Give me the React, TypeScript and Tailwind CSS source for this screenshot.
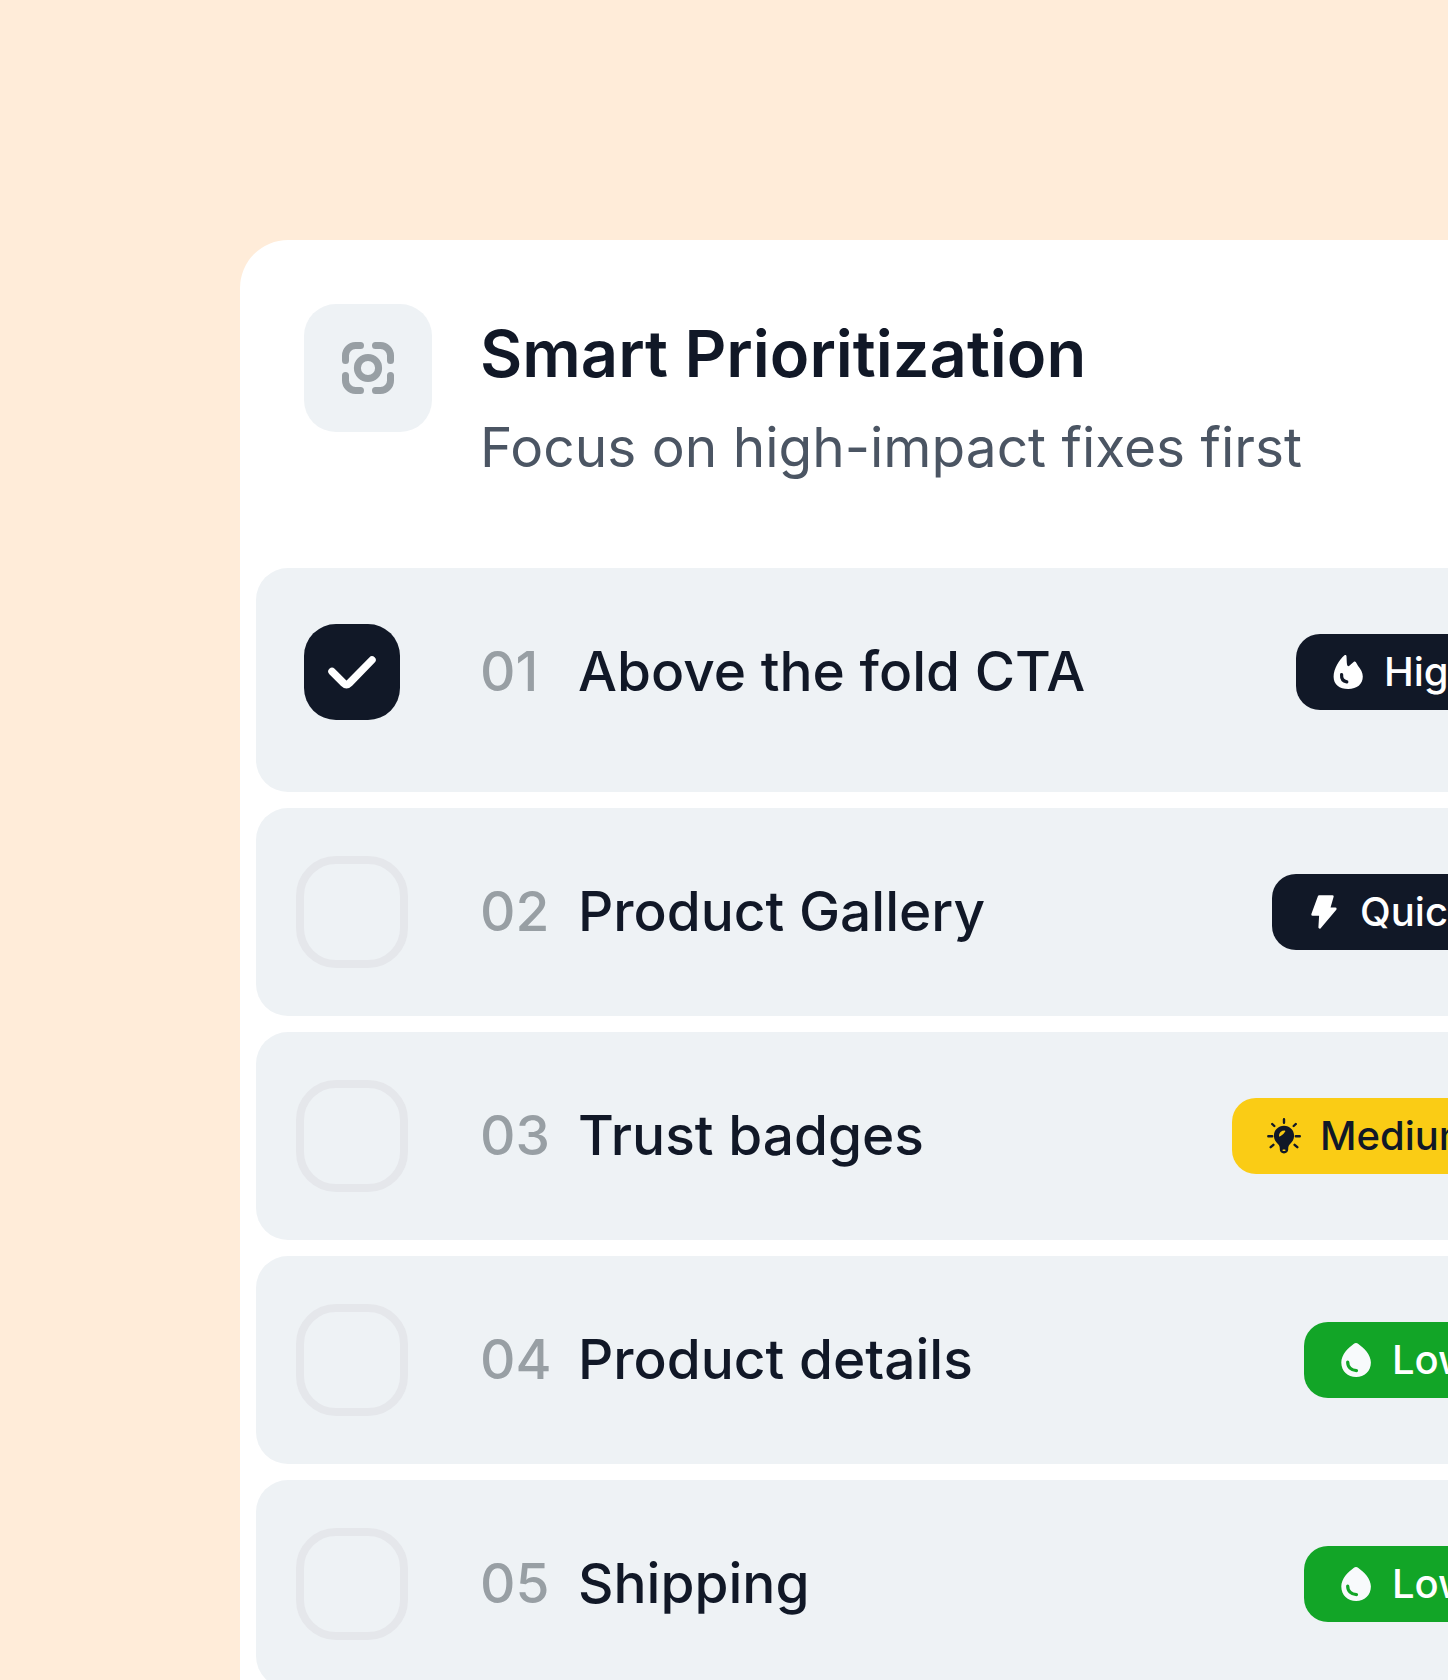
import { useState } from "react";
import type { ReactNode } from "react";
import clsx from "clsx";

type Task = {
  no: string;
  name: string;
  badge: string;
  tone: string;
  icon: ReactNode;
};

function FlameIcon() {
  return (
    <svg viewBox="0 0 40 40" className="size-10 shrink-0" fill="none" aria-hidden="true">
      <path
        d="M16.500 3.200c1-.6 1.900-.1 2 1 .2 3.200.2 6.200.6 8.600.3 1.500 1.500 1.700 2.500.8l4-3.700c.9-.7 1.600-.6 2.200.200l2.300 3.900c2.700 3.400 4.700 6.400 4.700 10.600 0 7.800-5.800 12.400-14.600 12.400S5.600 32.600 5.600 24.800C5.600 16.500 11.500 7.300 16.500 3.200Z"
        fill="#fff"
      />
      <path d="M13.600 22.500c-.3 4 1.800 6.800 5.200 7.400" stroke="#111827" strokeWidth="3.2" strokeLinecap="round" />
    </svg>
  );
}

function BoltIcon() {
  return (
    <svg viewBox="0 0 40 40" className="size-10 shrink-0" aria-hidden="true">
      <path
        d="M15.200 4.500h13.200l-3.600 12.300h6.500L15.700 35.300l.8-12.900H8.600Z"
        fill="#fff"
        stroke="#fff"
        strokeWidth="2.6"
        strokeLinejoin="round"
      />
    </svg>
  );
}

function BulbIcon() {
  return (
    <svg viewBox="0 0 40 40" className="size-10 shrink-0" fill="none" aria-hidden="true">
      <path
        d="M20 9.700c5.700 0 10.100 4.400 10.100 10 0 3.700-1.800 6.100-4 8.300-1.500 1.500-1.900 2.900-1.900 4.800v.8c0 2.300-1.700 3.800-4.200 3.800s-4.200-1.500-4.200-3.800v-.8c0-1.900-.4-3.300-1.900-4.800-2.200-2.200-4-4.600-4-8.300 0-5.600 4.400-10 10.100-10Z"
        fill="#111827"
      />
      <path
        d="M20 3.200v3.600M4.300 20.300h3.900M31.800 20.300h4M8.200 8l2.100 2M31.800 8l-2.100 2M6.700 31.200l2.700-2.400M33.300 31.200l-2.700-2.400"
        stroke="#111827"
        strokeWidth="2.400"
        strokeLinecap="round"
      />
      <path d="M15.600 20c0-2.900 2-4.800 5.100-4.800-1.200 2.200-2.700 3.700-5.100 4.800Z" fill="#facc15" stroke="#facc15" strokeWidth="1.200" strokeLinejoin="round" />
      <path d="M19.200 34.200h1.600" stroke="#facc15" strokeWidth="1.500" strokeLinecap="round" />
    </svg>
  );
}

function DropIcon() {
  return (
    <svg viewBox="0 0 40 40" className="size-10 shrink-0" fill="none" aria-hidden="true">
      <path
        d="M17.600 3.900c1.500-1.200 3.300-1.200 4.800 0C28 7.900 34.900 14.700 34.900 22.400 34.900 31 28.400 37 20.100 37S5.300 31 5.300 22.400C5.300 14.700 12 7.900 17.600 3.900Z"
        fill="#f8fafc"
      />
      <path d="M11.700 22c-.1 5 3.500 8.600 8.800 8.600" stroke="#12a527" strokeWidth="3.200" strokeLinecap="round" />
    </svg>
  );
}

function FocusIcon() {
  return (
    <svg viewBox="0 0 64 64" className="size-16" fill="none" stroke="#989fa4" strokeWidth="7" strokeLinecap="round" strokeLinejoin="round" aria-hidden="true">
      <path d="M9.500 24.500v-5a10 10 0 0 1 10-10h5M39.500 9.500h5a10 10 0 0 1 10 10v5M54.500 39.500v5a10 10 0 0 1-10 10h-5M24.500 54.500h-5a10 10 0 0 1-10-10v-5" />
      <circle cx="32" cy="32" r="10.600" />
    </svg>
  );
}

const TASKS: Task[] = [
  { no: "01", name: "Above the fold CTA", badge: "High", tone: "w-[204px] bg-[#111827] text-white", icon: <FlameIcon /> },
  { no: "02", name: "Product Gallery", badge: "Quick", tone: "w-[228px] bg-[#111827] text-white", icon: <BoltIcon /> },
  { no: "03", name: "Trust badges", badge: "Medium", tone: "w-[268px] bg-[#facc15] text-[#111827]", icon: <BulbIcon /> },
  { no: "04", name: "Product details", badge: "Low", tone: "w-[196px] bg-[#12a527] text-white", icon: <DropIcon /> },
  { no: "05", name: "Shipping", badge: "Low", tone: "w-[196px] bg-[#12a527] text-white", icon: <DropIcon /> },
];

function TaskRow({ task, checked, onToggle }: { task: Task; checked: boolean; onToggle: () => void }) {
  const id = `task-${task.no}`;
  return (
    <li className={clsx("flex items-center gap-[72px] rounded-[32px] bg-[#eef2f5] pt-12 pr-12 pl-10", checked ? "pb-16" : "pb-12")}>
      <span className="grid size-28 shrink-0 place-items-center">
        <input
          id={id}
          type="checkbox"
          checked={checked}
          onChange={onToggle}
          className="col-start-1 row-start-1 size-28 appearance-none rounded-[40px] border-8 border-[#e5e7eb] checked:size-24 checked:rounded-[32px] checked:border-0 checked:bg-[#111827]"
        />
        {checked && (
          <svg viewBox="0 0 96 96" className="pointer-events-none col-start-1 row-start-1 size-24" fill="none" aria-hidden="true">
            <path d="M28 47.500 39.500 59q3 3 6 0L68 36" stroke="#fff" strokeWidth="7.500" strokeLinecap="round" strokeLinejoin="round" />
          </svg>
        )}
      </span>
      <label htmlFor={id} className="flex flex-1 pb-0.5 text-[55px] leading-16 font-medium whitespace-nowrap text-[#111827]">
        <span className="w-[98px] shrink-0 text-[#989fa4]">{task.no}</span>
        {task.name}
      </label>
      <span className={clsx("flex h-[76px] shrink-0 items-center gap-4 rounded-3xl pl-8 text-[40px] leading-12 font-medium", task.tone)}>
        {task.icon}
        {task.badge}
      </span>
    </li>
  );
}

export default function App() {
  const [done, setDone] = useState<string[]>(["01"]);

  const toggle = (no: string) =>
    setDone((prev) => (prev.includes(no) ? prev.filter((n) => n !== no) : [...prev, no]));

  return (
    <main className="h-screen overflow-hidden bg-[#ffecd9] pt-60 pl-60 font-['Inter','Liberation_Sans',sans-serif]">
      {/* card bleeds off the right and bottom edges */}
      <section className="-mr-[116px] rounded-t-[48px] bg-white px-4 pb-4">
        <header className="flex gap-12 px-12 pt-16 pb-[88px]">
          <span className="flex size-32 shrink-0 items-center justify-center rounded-[32px] bg-[#eef2f5]">
            <FocusIcon />
          </span>
          <div className="pt-2.5 whitespace-nowrap">
            <h1 className="text-[65px] leading-20 font-semibold text-[#111827]">Smart Prioritization</h1>
            <p className="mt-5 text-[55px] leading-[66px] text-[#4b5563]">Focus on high-impact fixes first</p>
          </div>
        </header>
        <ul className="flex flex-col gap-4">
          {TASKS.map((task) => (
            <TaskRow key={task.no} task={task} checked={done.includes(task.no)} onToggle={() => toggle(task.no)} />
          ))}
        </ul>
      </section>
    </main>
  );
}
